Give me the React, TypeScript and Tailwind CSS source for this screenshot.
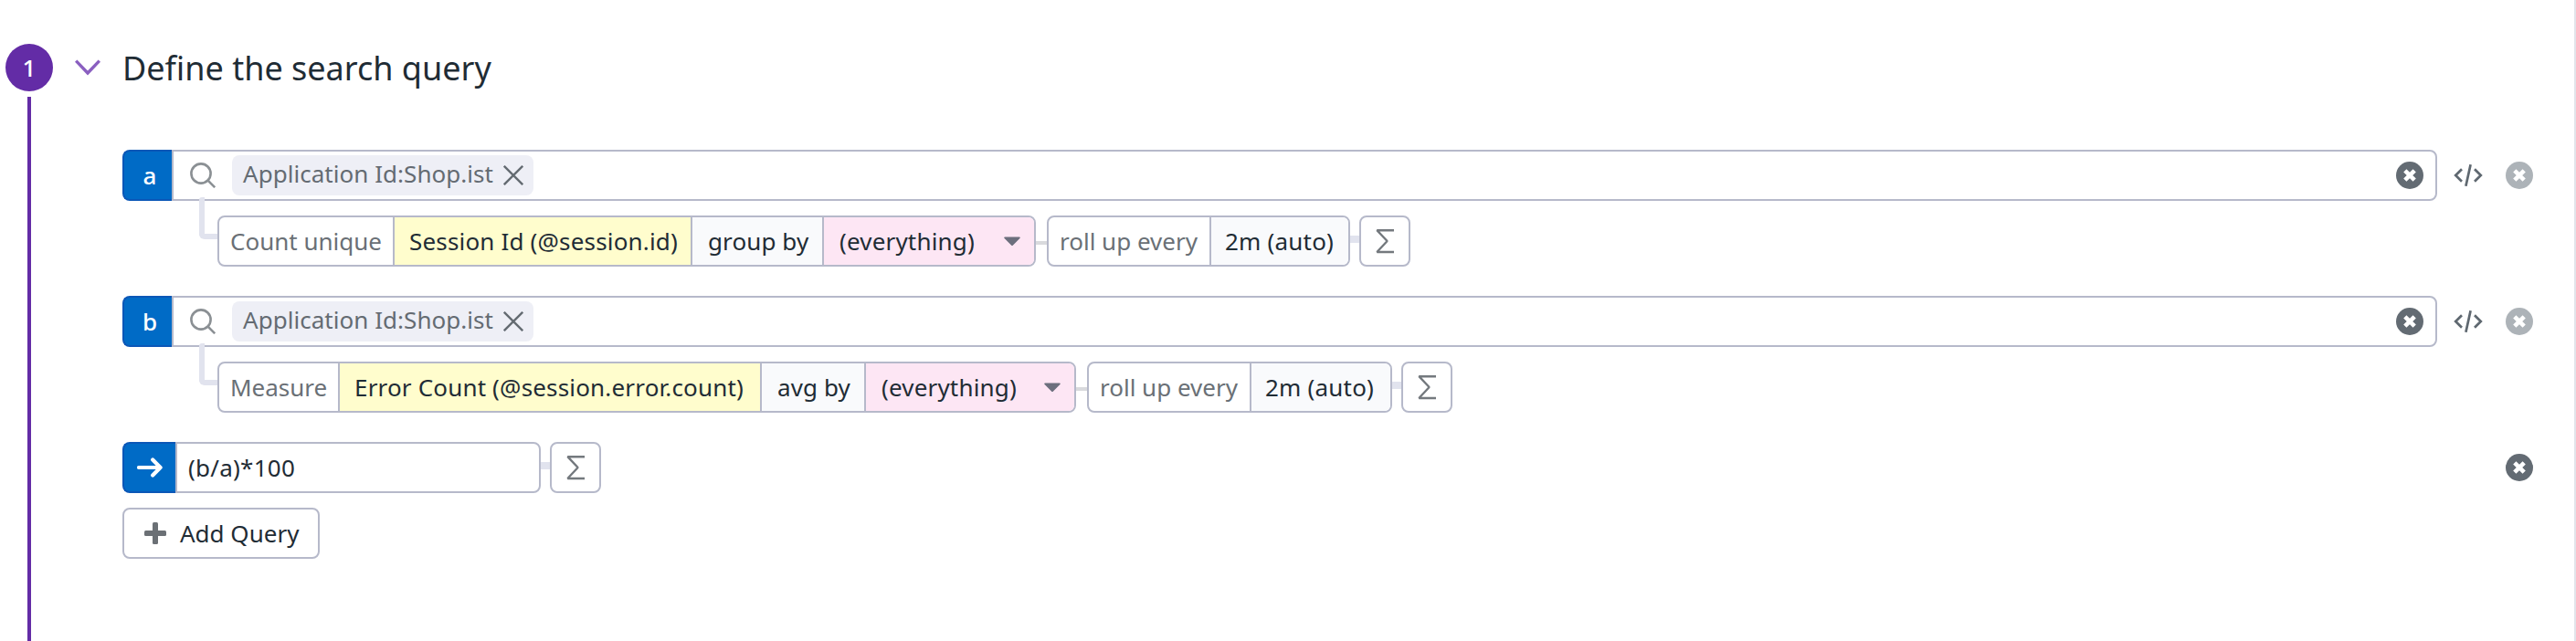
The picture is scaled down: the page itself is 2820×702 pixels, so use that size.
import React from "react";

const box = "box-border h-14 border-2 border-[#b6b9ca] bg-white";

function ClearIcon({ muted = false }: { muted?: boolean }) {
  return (
    <svg width="30" height="30" viewBox="0 0 30 30" className={muted ? "shrink-0 text-[#adb3b8]" : "shrink-0 text-[#636b73]"}>
      <circle cx="15" cy="15" r="15" fill="currentColor" />
      <path d="M9.8 9.8l10.4 10.4M20.2 9.8L9.8 20.2" stroke="#fff" strokeWidth="4.6" />
    </svg>
  );
}

function SearchIcon() {
  return (
    <svg width="28" height="28" viewBox="0 0 28 28" fill="none" stroke="#8b9094" strokeWidth="2.6">
      <circle cx="12" cy="12" r="10.6" />
      <path d="M19.4 19.4L27.2 27.2" />
    </svg>
  );
}

function CodeIcon() {
  return (
    <svg width="32" height="24" viewBox="0 0 32 24" fill="none" stroke="#5f6870" strokeWidth="2.7">
      <path d="M9 5.2L2.2 12L9 18.8M23 5.2L29.8 12L23 18.8M18.6 0.2L13.4 23.8" />
    </svg>
  );
}

function SigmaBox() {
  return (
    <div className={`${box} flex w-14 items-center justify-center rounded-lg pr-px`}>
      <svg width="22" height="28" viewBox="0 0 22 28" fill="none" stroke="#74797e" strokeWidth="2.4">
        <path d="M21 2.2H2.4L13.6 14L2.4 26H21" strokeLinejoin="bevel" />
      </svg>
    </div>
  );
}

function Link() {
  return <div className="mb-1 h-2 w-2.5 bg-[#e1e3ee]" />;
}

function SearchRow({ letter }: { letter: string }) {
  return (
    <div className="flex h-14 items-center">
      <div className="flex h-14 w-[54px] items-center justify-center rounded-l-lg border-2 border-r-0 border-[#0b57b7] bg-[#006bc6] pl-1 font-medium text-white">
        {letter}
      </div>
      <div className={`${box} flex w-[2480px] items-center rounded-r-lg pr-[13px] pl-[18px]`}>
        <SearchIcon />
        <div className="ml-[18px] flex h-11 w-[330px] items-center rounded-lg bg-[#eeeff6] pl-3 text-[#646b72]">
          <span className="w-[285px] pb-1 leading-9 tracking-[0.04px]">Application Id:Shop.ist</span>
          <svg width="22" height="22" viewBox="0 0 22 22" stroke="#646b72" strokeWidth="2.4">
            <path d="M0.8 0.8L21.2 21.2M21.2 0.8L0.8 21.2" />
          </svg>
        </div>
        <div className="ml-auto flex">
          <ClearIcon />
        </div>
      </div>
      <div className="ml-[18px] mr-[25px]">
        <CodeIcon />
      </div>
      <ClearIcon muted />
    </div>
  );
}

type QueryProps = {
  letter: string;
  label: string;
  measure: string;
  aggregate: string;
  labelWidth: string;
  measureWidth: string;
  aggregateWidth: string;
  groupWidth: string;
  rollupWidth: string;
};

function Query(q: QueryProps) {
  return (
    <section className="h-40">
      <SearchRow letter={q.letter} />
      <div className="flex h-[72px] items-start pl-[84px]">
        <div className="relative -mt-1 h-[46px] w-5 rounded-tl-[3px] rounded-bl-md border-b-[6px] border-l-[6px] border-[#e1e3ee]" />
        <div className="mt-4 flex items-center">
          <div className={`${box} flex overflow-hidden rounded-lg leading-[52px]`}>
            <div className={`${q.labelWidth} border-r-2 border-[#b6b9ca] pl-3 text-[#6a7076]`}>{q.label}</div>
            <div className={`${q.measureWidth} border-r-2 border-[#b6b9ca] bg-[#fffdcd] pl-4 tracking-[0.17px]`}>{q.measure}</div>
            <div className={`${q.aggregateWidth} border-r-2 border-[#b6b9ca] bg-[#f9fafc] pl-[17px] tracking-[0.1px]`}>{q.aggregate}</div>
            <div className={`${q.groupWidth} flex items-center bg-[#fde6f4] pl-[17px] tracking-[0.17px]`}>
              <span>(everything)</span>
              <svg className="mr-[15px] ml-auto" width="18" height="11" viewBox="0 0 18 11">
                <path d="M1.2 0.5H16.8Q18.6 0.8 17.2 2.2L10 9.4Q9 10.4 8 9.4L0.8 2.2Q-0.6 0.8 1.2 0.5Z" fill="#6c6f7d" />
              </svg>
            </div>
          </div>
          <div className="mt-1 h-1 w-3 bg-[#d9dadd]" />
          <div className={`${box} flex overflow-hidden rounded-lg leading-[52px]`}>
            <div className="w-[178px] border-r-2 border-[#b6b9ca] pl-3 text-[#6a7076]">roll up every</div>
            <div className={`${q.rollupWidth} bg-[#f9fafc] pl-[15px] tracking-[0.2px]`}>2m (auto)</div>
          </div>
          <Link />
          <SigmaBox />
        </div>
      </div>
    </section>
  );
}

export default function App() {
  return (
    <main className="flex h-[702px] w-[2820px] overflow-hidden border-r-2 border-[#e2e4ea] bg-white font-['Noto_Sans',sans-serif] text-[26px] whitespace-nowrap text-[#1f2c35]">
      <aside className="flex w-16 shrink-0 flex-col items-center pt-12">
        <div className="flex size-[52px] shrink-0 items-center justify-center rounded-full bg-[#632ca6] font-medium text-white">1</div>
        <div className="mt-1.5 w-1 grow bg-[#632ca6]" />
      </aside>
      <div className="flex w-[2754px] flex-col">
        <header className="flex h-[164px] items-start pt-12 pl-[18px]">
          <div className="flex h-[52px] items-center">
            <svg width="28" height="18" viewBox="0 0 28 18" fill="none" stroke="#8a5fc0" strokeWidth="3.4">
              <path d="M1.2 1.6L14 15L26.8 1.6" />
            </svg>
            <h1 className="mt-0.5 ml-6 text-[36px] leading-[52px]">Define the search query</h1>
          </div>
        </header>
        <div className="pl-[70px]">
          <Query
            letter="a"
            label="Count unique"
            measure="Session Id (@session.id)"
            aggregate="group by"
            labelWidth="w-[192px]"
            measureWidth="w-[326px]"
            aggregateWidth="w-[144px]"
            groupWidth="w-[230px]"
            rollupWidth="w-[150px]"
          />
          <Query
            letter="b"
            label="Measure"
            measure="Error Count (@session.error.count)"
            aggregate="avg by"
            labelWidth="w-[132px]"
            measureWidth="w-[462px]"
            aggregateWidth="w-[114px]"
            groupWidth="w-[228px]"
            rollupWidth="w-[152px]"
          />
          <div className="flex h-14 w-[2639px] items-center">
            <div className="flex h-14 w-[58px] items-center justify-center rounded-l-lg border-2 border-r-0 border-[#0b57b7] bg-[#006bc6]">
              <svg width="28" height="22" viewBox="0 0 28 22" fill="none" stroke="#fff" strokeWidth="4.2" strokeLinecap="round" strokeLinejoin="round">
                <path d="M2 11H25.6M17.2 2.6L25.6 11L17.2 19.4" />
              </svg>
            </div>
            <div className={`${box} w-[400px] rounded-r-lg pl-3 leading-[52px] tracking-[0.25px]`}>(b/a)*100</div>
            <Link />
            <SigmaBox />
            <div className="ml-auto flex">
              <ClearIcon />
            </div>
          </div>
          <button className={`${box} mt-4 flex w-[216px] items-center rounded-lg pl-[22px]`}>
            <svg width="24" height="24" viewBox="0 0 24 24" fill="#6b7075">
              <rect x="9" width="6" height="24" rx="1.5" />
              <rect y="9" width="24" height="6" rx="1.5" />
            </svg>
            <span className="ml-[15px]">Add Query</span>
          </button>
        </div>
      </div>
    </main>
  );
}
